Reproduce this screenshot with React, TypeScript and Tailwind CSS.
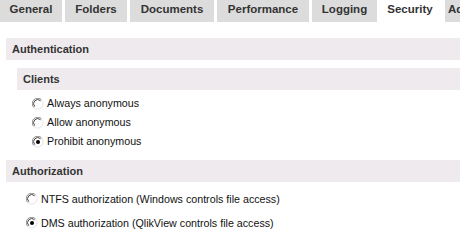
const tabs = [
  { label: "General", w: "w-[62px]" },
  { label: "Folders", w: "w-[62px]" },
  { label: "Documents", w: "w-[84px]" },
  { label: "Performance", w: "w-[92px]" },
  { label: "Logging", w: "w-[65px]" },
];

const Radio = ({ checked }: { checked?: boolean }) => (
  <svg width="12" height="12" viewBox="0 0 12 12" className="shrink-0">
    <circle cx="6" cy="6" r="5.5" fill="#fff" />
    <path d="M1.8 9.5 A5 5 0 0 1 9.5 1.8" fill="none" stroke="#8a8a8a" strokeWidth="1" />
    <path d="M2.8 8.6 A4 4 0 0 1 8.6 2.8" fill="none" stroke="#404040" strokeWidth="1" />
    <path d="M9.5 1.8 A5 5 0 0 1 1.8 9.5" fill="none" stroke="#e4e4e4" strokeWidth="1" />
    {checked && <circle cx="6" cy="6" r="2" fill="#000" />}
  </svg>
);

const Option = ({ label, checked, h }: { label: string; checked?: boolean; h: string }) => (
  <div className={`flex items-center gap-[3px] ${h}`}>
    <Radio checked={checked} />
    <span className="text-[10.7px] text-[#111]">{label}</span>
  </div>
);

export default function App() {
  return (
    <div className="w-[460px] h-[241px] overflow-hidden bg-white font-['Liberation_Sans',Arial,sans-serif]">
      <div className="flex h-[22px] gap-[3px]">
        {tabs.map((t) => (
          <div
            key={t.label}
            className={`${t.w} shrink-0 bg-[#dcdcdc] flex justify-center pt-[1px] text-[11.5px] font-bold text-[#333]`}
          >
            {t.label}
          </div>
        ))}
        <div className="w-[66px] shrink-0 -ml-[3px] bg-white flex justify-center pt-[1px] text-[11.5px] font-bold text-[#333]">
          Security
        </div>
        <div className="w-[40px] shrink-0 -ml-[1px] bg-[#dcdcdc] flex pl-[3px] pt-[1px] text-[11.5px] font-bold text-[#333]">
          Advanced
        </div>
      </div>

      <div className="pl-[6px] pt-[16px]">
        <div className="h-[22px] bg-[#eeeaed] flex items-center pl-[6px] text-[11px] font-bold text-[#333]">
          Authentication
        </div>
        <div className="pl-[11px] pt-[8px]">
          <div className="h-[22px] bg-[#eeeaed] flex items-center pl-[6px] text-[11px] font-bold text-[#333]">
            Clients
          </div>
          <div className="pl-[15px] pt-[4px]">
            <Option label="Always anonymous" h="h-[19px]" />
            <Option label="Allow anonymous" h="h-[19px]" />
            <Option label="Prohibit anonymous" h="h-[19px]" checked />
          </div>
        </div>
        <div className="mt-[9px] h-[22px] bg-[#eeeaed] flex items-center pl-[6px] text-[11px] font-bold text-[#333]">
          Authorization
        </div>
        <div className="pl-[20px] pt-[5px]">
          <Option label="NTFS authorization (Windows controls file access)" h="h-[24px]" />
          <Option label="DMS authorization (QlikView controls file access)" h="h-[24px]" checked />
        </div>
      </div>
    </div>
  );
}
